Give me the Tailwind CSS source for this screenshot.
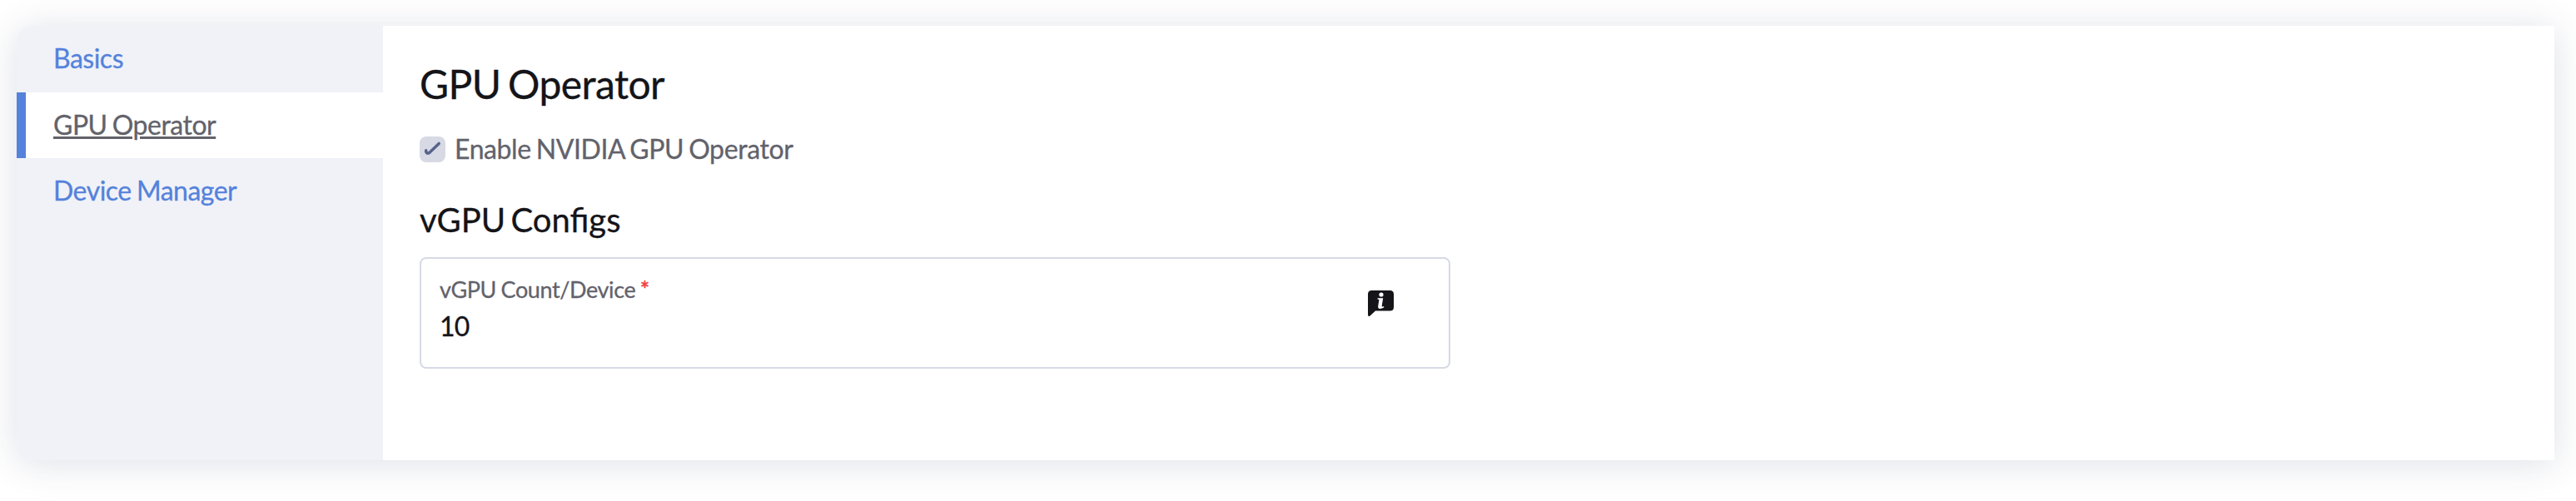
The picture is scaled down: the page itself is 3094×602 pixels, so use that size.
<!DOCTYPE html>
<html lang="en">
<head>
<meta charset="utf-8">
<title>GPU Operator</title>
<script src="https://cdn.jsdelivr.net/npm/@tailwindcss/browser@4"></script>
</head>
<body class="bg-white font-[Lato,sans-serif] text-[32px] leading-[40px] text-[#141419] overflow-hidden [-webkit-text-stroke:0.3px]">
<div class="pt-[31px] pl-5 h-[602px] overflow-hidden">
  <div class="flex w-[3048px] h-[522px] rounded-l-[20px] bg-white shadow-[0_4px_44px_rgba(50,60,105,0.16)]">
    <nav class="flex flex-col w-[440px] bg-[#f0f2f8] rounded-l-[20px] tracking-[-0.5px] [word-spacing:-1.5px]">
      <a class="flex items-center h-20 pb-0.5 pl-[44px] text-[#5582db]">Basics</a>
      <a class="flex items-center h-[79px] pb-px bg-white border-l-[11px] border-[#5582db] pl-[33px] text-[#62626b] underline decoration-[3px] underline-offset-[2px]">GPU Operator</a>
      <a class="flex items-center h-20 pb-0.5 pl-[44px] text-[#5582db]">Device Manager</a>
    </nav>
    <main class="flex flex-col items-start pl-[44px] pt-[39px]">
      <h1 class="text-[48px] leading-[62px] tracking-[-0.6px] [word-spacing:-3px]">GPU Operator</h1>
      <label class="flex items-center gap-[11px] mt-[27px] text-[#62626b]">
        <svg class="size-[31px] mt-px" viewBox="0 0 31 31" fill="none"><rect width="31" height="31" rx="8" fill="#d7dae4"/><path d="M7.7 16.800V18.200Q8.600 20.800 11.200 19.900L23.200 8.400" stroke="#58638b" stroke-width="3.500" stroke-linecap="round" stroke-linejoin="round"/></svg>
        <span class="tracking-[-0.4px] [word-spacing:-1.8px]">Enable NVIDIA GPU Operator</span>
      </label>
      <h2 class="mt-[39px] text-[40px] leading-[52px] [word-spacing:-4px]">vGPU Configs</h2>
      <div class="flex justify-between mt-[19px] w-[1238px] h-[134px] border-2 border-[#d7dae4] rounded-lg pl-[22px] pr-[66px] pt-[19px]">
        <div>
          <div class="text-[27px] leading-9 text-[#62626b] tracking-[-0.4px] [word-spacing:-1px]">vGPU Count/Device <span class="text-[#f04040] [-webkit-text-stroke:0.6px]">*</span></div>
          <div class="mt-[6px] tracking-[-0.8px]">10</div>
        </div>
        <svg class="w-[31px] h-[31px] mt-[19px]" viewBox="0 0 31 31"><path d="M4.500 0H26.500Q31 0 31 4.500V20Q31 24.500 26.500 24.500H9L2.500 30.500Q0 32 0 29V4.500Q0 0 4.500 0Z" fill="#141419"/><circle cx="16" cy="5" r="2.600" fill="#fff"/><path d="M11.500 9.200H18.200L16.700 18.500Q16.400 20 19.200 19.100V20.600Q16 22.600 13.500 21.900Q11.700 21.200 12.200 18.800L13.400 11.300Q13.500 10.400 11.500 10.400Z" fill="#fff"/></svg>
      </div>
    </main>
  </div>
</div>
</body>
</html>
